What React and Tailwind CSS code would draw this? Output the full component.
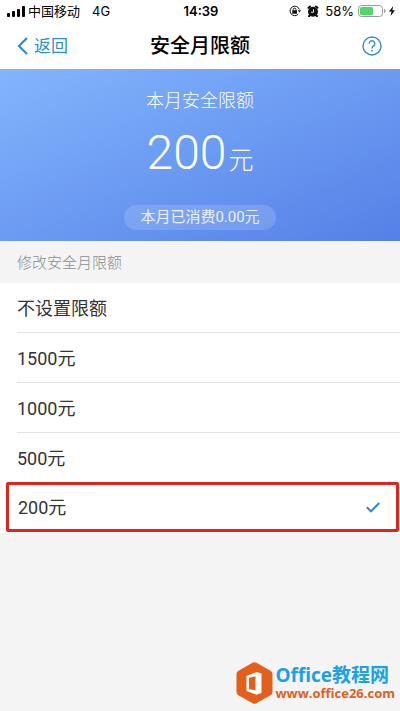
import { useState } from 'react';

const LIMITS = ['不设置限额', '1500元', '1000元', '500元', '200元'];

function StatusBar() {
  return (
    <div className="grid grid-cols-3 items-center h-[22px] pl-[7px] pr-[5px] text-[13px] leading-none text-black font-['Inter','Noto_Sans_CJK_SC',sans-serif]">

      {/* Carrier */}
      <div className="flex items-center">
        <svg width="18" height="11" viewBox="0 0 18 11" className="mr-[3px]">
          <rect x="0" y="7" width="3" height="4" rx="1" />
          <rect x="5" y="5" width="3" height="6" rx="1" />
          <rect x="10" y="3" width="3" height="8" rx="1" />
          <rect x="15" y="0" width="3" height="11" rx="1" />
        </svg>
        <span className="whitespace-nowrap">中国移动</span>
        <span className="ml-3">4G</span>
      </div>

      <div className="text-center font-semibold">14:39</div>

      {/* Indicators */}
      <div className="flex items-center justify-end">
        <svg width="12" height="12" viewBox="0 0 24 24" fill="none" stroke="#111" strokeWidth="2" className="mr-[6px] shrink-0">
          <path d="M18.500 18.500A9.500 9.500 0 1 1 20.700 9" />
          <path d="M17.500 10.500h6.500l-3.200 4.500z" fill="#111" stroke="none" />
          <rect x="6.500" y="10.500" width="9.500" height="7" fill="#111" stroke="none" />
          <path d="M8.500 11V9a2.700 2.700 0 0 1 5.400 0v2" />
        </svg>
        <svg width="12" height="12" viewBox="0 0 24 24" className="mr-[6px] shrink-0">
          <circle cx="12" cy="13.500" r="10" fill="#111" />
          <path d="M3 5.500L6 3M21 5.500L18 3M5 21.500l-1 1M19 21.500l1 1" stroke="#111" strokeWidth="4" strokeLinecap="round" />
          <path d="M13 8.500v6H8" fill="none" stroke="#fff" strokeWidth="1.800" />
        </svg>
        <span>58%</span>
        <svg width="28" height="12" viewBox="0 0 28 12" className="ml-1 shrink-0">
          <rect x="0.500" y="0.500" width="24" height="11" rx="3" fill="none" stroke="#999" />
          <rect x="2" y="2" width="13" height="8" rx="1.500" fill="#4cd964" />
          <path d="M26 4v4q1.700-.6 1.700-2t-1.700-2z" fill="#999" />
        </svg>
        <svg width="6" height="10" viewBox="0 0 6 10" className="ml-[3px] shrink-0">
          <path d="M4.200 0L0 5.600h2.500L1.600 10 6 4.200H3.400z" fill="#111" />
        </svg>
      </div>
    </div>
  );
}

function NavBar() {
  return (
    <header className="grid grid-cols-[1fr_auto_1fr] items-center h-[47px] px-[17px]">
      <button type="button" className="flex items-center gap-1.5 justify-self-start text-[17px] leading-6 text-[#2f8fcb]">
        <svg width="11" height="18" viewBox="0 0 11 18" fill="none" stroke="currentColor" strokeWidth="2.200">
          <path d="M10 1L2 9l8 8" />
        </svg>
        返回
      </button>
      <h1 className="text-[20px] leading-6 font-medium text-black">安全月限额</h1>
      <button type="button" aria-label="帮助" className="justify-self-end pr-px text-[#2f8fcb]">
        <svg width="20" height="20" viewBox="0 0 20 20" fill="none" stroke="currentColor" strokeWidth="1.400">
          <circle cx="10" cy="10" r="9" />
          <path d="M7.200 7.600a2.800 2.800 0 1 1 4.400 2.300c-1 .7-1.600 1.200-1.600 2.500" />
          <circle cx="10" cy="14.700" r="0.900" fill="currentColor" stroke="none" />
        </svg>
      </button>
    </header>
  );
}

function Summary({ limit }) {
  return (
    <section className="flex flex-col items-center pt-5 pb-[11px] text-white bg-linear-to-br from-[#83b5fd] to-[#5580e7]">
      <h2 className="text-[18px] leading-6 font-light">本月安全限额</h2>
      <p className="mt-2.5 text-[48px] leading-[60px] font-light">
        {limit}
        <span className="ml-0.5 text-[25px] leading-6">元</span>
      </p>
      <p className="mt-[22px] px-4 rounded-full bg-white/15 text-[15px] leading-[25px] text-white/85">本月已消费0.00元</p>
    </section>
  );
}

function LimitOption({ label, checked, onSelect }) {
  return (
    <label
      className={
        checked
          ? 'flex items-center h-[50px] -mt-px ml-[6px] mr-[1px] pl-[9px] pr-4 rounded-xs border-3 border-[#e2231a] bg-white cursor-pointer'
          : 'flex items-center h-[50px] ml-[17px] pr-[19px] border-b border-[#e4e4e4] last:border-b-0 cursor-pointer'
      }
    >
      <input type="radio" name="limit" checked={checked} onChange={onSelect} className="sr-only" />
      <span className="grow pt-0.5 text-[18px] leading-6 text-[#333]">{label}</span>
      {checked && (
        <svg width="14" height="11" viewBox="0 0 14 11" fill="none" stroke="#2b86c5" strokeWidth="2">
          <path d="M0.800 5.200l4.200 4.200L13.200 1" />
        </svg>
      )}
    </label>
  );
}

function SiteMark() {
  return (
    <a href="#office" className="flex items-center gap-0.5 font-['Open_Sans','Noto_Sans_CJK_SC',sans-serif] font-bold">
      <svg width="37" height="42" viewBox="0 0 37 42">
        <path d="M16.500.8q2-1.100 4 0l14 8q2 1.200 2 3.500v17.400q0 2.300-2 3.500l-14 8q-2 1.100-4 0l-14-8q-2-1.200-2-3.500V12.300q0-2.300 2-3.500z" fill="#e2601c" />
        <path d="M10.500 14L20.500 10l5 1.500v19.500l-5 1.700-10-3.700zM13 15.800v11.400l6.500 1V14.200z" fill="#fff" fillRule="evenodd" />
      </svg>
      <span className="flex flex-col">
        <span className="text-[19px] leading-5 text-[#1ba1e6]">Office教程网</span>
        <span className="text-[13px] leading-4 text-[#e2601c]">www.office26.com</span>
      </span>
    </a>
  );
}

function App() {
  const [selected, setSelected] = useState('200元');

  return (
    <div className="flex flex-col min-h-screen bg-[#f4f4f4] font-['Roboto','Noto_Sans_CJK_SC',sans-serif]">
      <div className="bg-white">
        <StatusBar />
        <NavBar />
      </div>
      <Summary limit="200" />

      {/* Limit list */}
      <h2 className="pt-0.5 px-[17px] text-[15px] leading-10 text-[#8c8c8c] font-light">修改安全月限额</h2>
      <div role="radiogroup" aria-label="修改安全月限额" className="pb-px bg-white">
        {LIMITS.map(label => (
          <LimitOption
            key={label}
            label={label}
            checked={label === selected}
            onSelect={() => setSelected(label)}
          />
        ))}
      </div>

      <footer className="flex justify-end mt-auto pr-[5px] pb-[7px]">
        <SiteMark />
      </footer>
    </div>
  );
}

export default App;
